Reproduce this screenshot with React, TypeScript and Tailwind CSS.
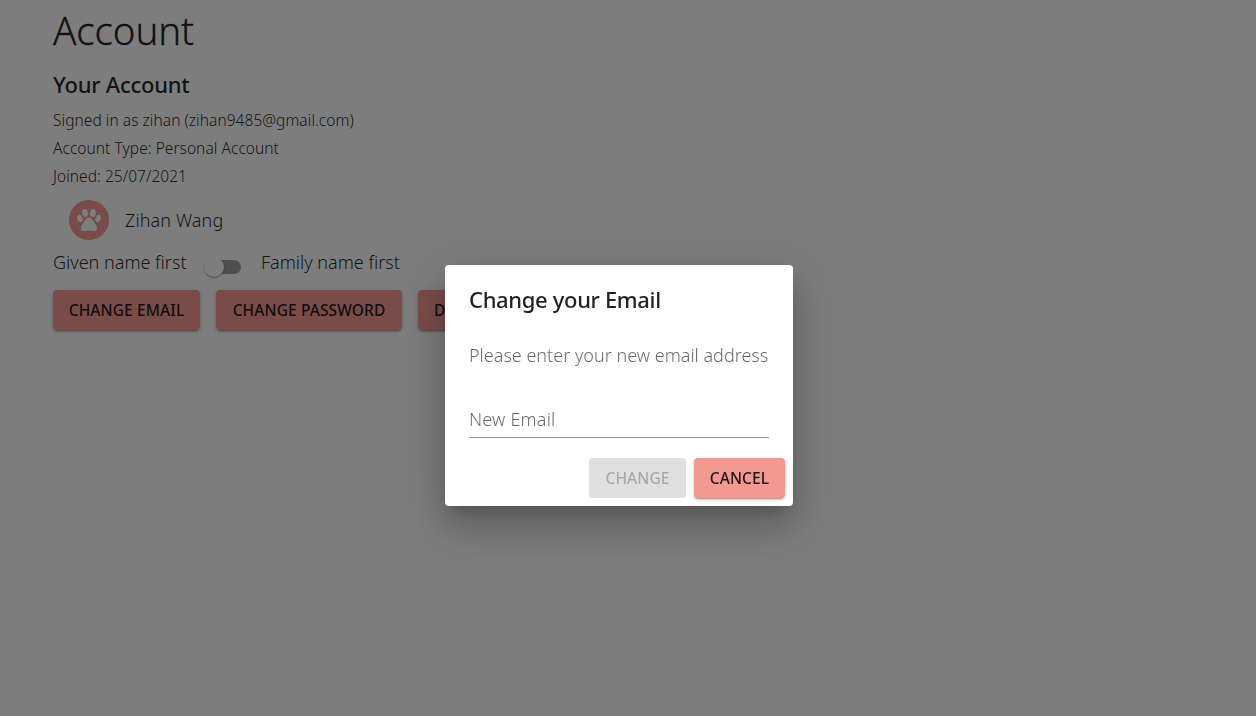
const raised =
  "shadow-[0_3px_1px_-2px_rgba(0,0,0,0.2),0_2px_2px_0_rgba(0,0,0,0.14),0_1px_5px_0_rgba(0,0,0,0.12)]";
const button =
  "flex items-center justify-center rounded-[4px] pt-[2px] font-medium text-[15.5px] tracking-[0.1px] whitespace-nowrap";

function PawAvatar() {
  return (
    <span className="flex size-10 items-center justify-center rounded-full bg-[#f39992] text-[#fafafa]">
      <svg viewBox="0 0 40 40" className="size-10" fill="currentColor">
        <ellipse cx="10.9" cy="18.4" rx="2.6" ry="3.7" transform="rotate(-18 10.9 18.4)" />
        <ellipse cx="16.1" cy="13" rx="2.8" ry="4.1" transform="rotate(-8 16.1 13)" />
        <ellipse cx="23.9" cy="13" rx="2.8" ry="4.1" transform="rotate(8 23.9 13)" />
        <ellipse cx="29.1" cy="18.4" rx="2.6" ry="3.7" transform="rotate(18 29.1 18.4)" />
        <path d="M20 17.6c-1.9 0-3 1.2-3.9 3-1.1 2.2-3.9 3.800-4.200 7.300-.1 2 1.200 3.200 3.100 3.200 1.700 0 3.100-.7 5-.7s3.300.7 5 .7c1.900 0 3.200-1.200 3.100-3.200-.3-3.500-3.100-5.100-4.200-7.300-.9-1.800-2-3-3.900-3z" />
      </svg>
    </span>
  );
}

function AccountPage() {
  return (
    <main className="flex h-full flex-col pl-[53px] text-black/87">
      <h1 className="h-[61px] text-[38.5px] leading-[60px] font-light tracking-[-0.1px] [-webkit-text-stroke:0.3px]">Account</h1>
      <h2 className="mt-2 h-8 text-[22px] leading-[30px] font-medium tracking-[-0.25px]">Your Account</h2>
      <div className="mt-[5px] text-[15.5px] leading-7 font-light tracking-[0.05px]">
        <p>Signed in as zihan (zihan9485@gmail.com)</p>
        <p>Account Type: Personal Account</p>
        <p>Joined: 25/07/2021</p>
      </div>
      <div className="mt-[10px] flex h-10 items-center gap-4 pl-4">
        <PawAvatar />
        <span className="text-[18px] font-light tracking-[0.1px]">Zihan Wang</span>
      </div>
      <div className="mt-2 flex h-7 items-center text-[18px] leading-7 font-light">
        <span className="w-[152px] whitespace-nowrap">Given name first</span>
        <span className="mt-[9px] flex h-[14px] w-9 items-center rounded-full bg-[#9c9c9c]">
          <span className="-ml-px size-5 shrink-0 rounded-full bg-[#fafafa] shadow-[0_2px_1px_-1px_rgba(0,0,0,0.2),0_1px_1px_0_rgba(0,0,0,0.14),0_1px_3px_0_rgba(0,0,0,0.12)]" />
        </span>
        <span className="ml-5 whitespace-nowrap">Family name first</span>
      </div>
      <div className="mt-[14px] flex h-10 gap-4">
        <button className={`${button} ${raised} w-[147px] bg-[#f39992]`}>CHANGE EMAIL</button>
        <button className={`${button} ${raised} w-[186px] bg-[#f39992]`}>CHANGE PASSWORD</button>
        <button className={`${button} ${raised} bg-[#f39992] px-4`}>DELETE ACCOUNT</button>
      </div>
    </main>
  );
}

function ChangeEmailDialog() {
  return (
    <section
      role="dialog"
      className="flex h-[241px] w-[348px] flex-col rounded-[4px] bg-white shadow-[0_11px_15px_-7px_rgba(0,0,0,0.2),0_24px_38px_3px_rgba(0,0,0,0.14),0_9px_46px_8px_rgba(0,0,0,0.12)]"
    >
      <h2 className="mt-[17px] px-6 text-[22px] leading-[35px] font-medium tracking-[-0.34px] text-black/87">
        Change your Email
      </h2>
      <p className="mt-6 pl-6 text-[18px] leading-7 font-light whitespace-nowrap text-black/60">
        Please enter your new email address
      </p>
      <div className="mx-6 mt-8 flex h-[37px] items-start border-b border-black/42 text-[18px] text-black/60">
        <label className="leading-9 font-light tracking-[0.2px]">New Email</label>
      </div>
      <div className="mt-5 flex h-10 justify-end gap-2 pr-2">
        <button disabled className={`${button} w-[97px] bg-[#e0e0e0] text-black/26`}>CHANGE</button>
        <button className={`${button} ${raised} w-[91px] bg-[#f39992] text-black/87`}>CANCEL</button>
      </div>
    </section>
  );
}

export default function App() {
  return (
    <div className="h-screen w-full overflow-hidden bg-[#fafafa] font-['Noto_Sans','Open_Sans',sans-serif]">
      <AccountPage />
      <div className="fixed inset-0 flex items-start bg-black/50 pt-[265px] pl-[445px]">
        <ChangeEmailDialog />
      </div>
    </div>
  );
}
